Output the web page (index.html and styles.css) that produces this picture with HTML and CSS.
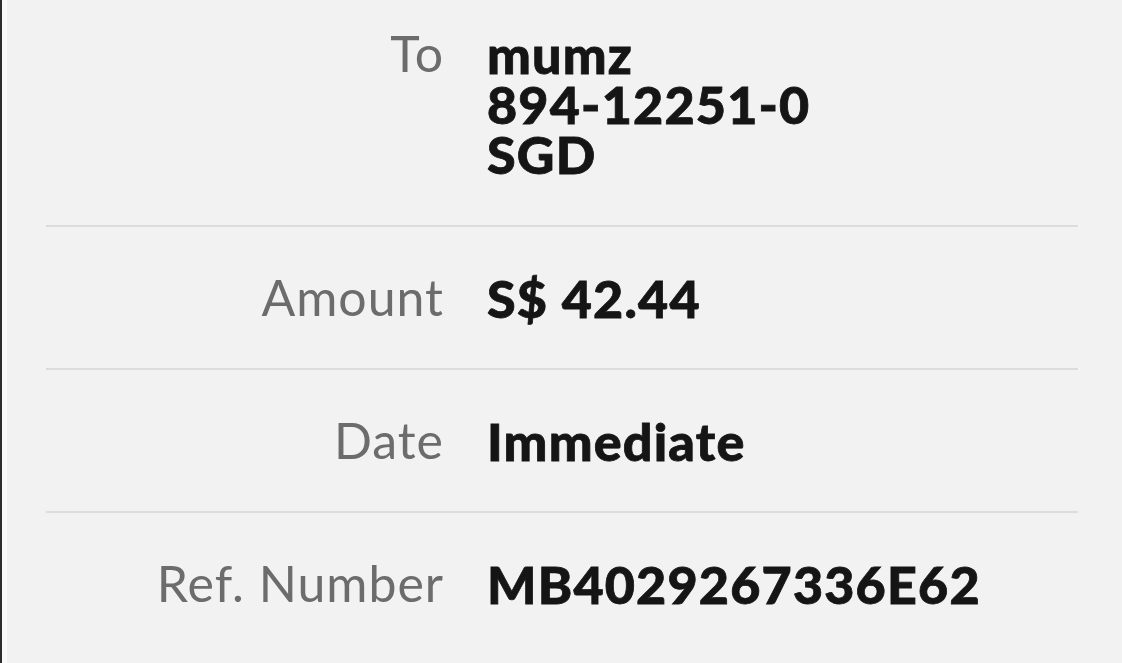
FILE: index.html
```html
<!DOCTYPE html>
<html lang="en">
<head>
<meta charset="utf-8">
<title>Transfer details</title>
<link rel="stylesheet" href="styles.css">
</head>
<body>
<div class="frame">
  <div class="details">
    <div class="row first">
      <div class="label">To</div>
      <div class="value">
        <div class="line">mumz</div>
        <div class="line">894-12251-0</div>
        <div class="line">SGD</div>
      </div>
    </div>
    <div class="divider"></div>
    <div class="row">
      <div class="label">Amount</div>
      <div class="value">S$ 42.44</div>
    </div>
    <div class="divider"></div>
    <div class="row">
      <div class="label">Date</div>
      <div class="value">Immediate</div>
    </div>
    <div class="divider"></div>
    <div class="row">
      <div class="label">Ref. Number</div>
      <div class="value">MB4029267336E62</div>
    </div>
  </div>
</div>
</body>
</html>
```
FILE: styles.css
```css
html, body {
  margin: 0;
  padding: 0;
  background: #f2f2f2;
}
.frame {
  height: 663px;
  box-sizing: border-box;
  border-left: 2px solid #2e2e2e;
  box-shadow: inset 5px 0 0 #fafafa;
  overflow: hidden;
  font-family: Lato, "Noto Sans", sans-serif;
}
.details {
  display: flex;
  flex-direction: column;
}
.row {
  display: grid;
  grid-template-columns: 441px 1fr;
  column-gap: 44px;
  padding: 45px 0 46px;
  font-size: 50px;
  line-height: 50px;
}
.row.first {
  padding-top: 28px;
  padding-bottom: 47px;
}
.label {
  text-align: right;
  color: #6c6c6c;
  font-weight: 400;
  letter-spacing: 1px;
  margin-right: -1px;
}
.value {
  color: #151515;
  font-size: 52px;
  font-weight: 900;
  letter-spacing: 1.2px;
  -webkit-text-stroke: 0.8px #151515;
  margin-top: 1px;
  margin-bottom: -1px;
}
.line {
  height: 50px;
}
.divider {
  height: 2px;
  background: #dcdcdc;
  margin: 0 44px 0 44px;
}
```
